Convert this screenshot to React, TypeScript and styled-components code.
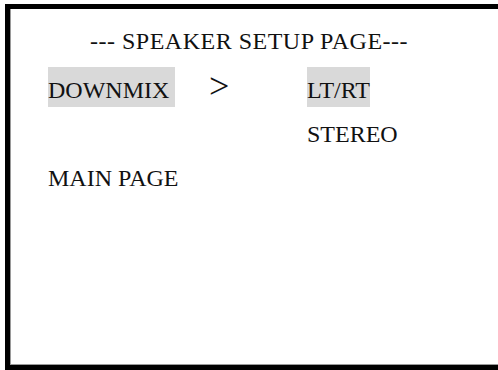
import * as React from 'react';
import styled, { createGlobalStyle } from 'styled-components';

const GlobalStyle = createGlobalStyle`
  html, body {
    margin: 0;
    padding: 0;
    background: #ffffff;
    overflow: hidden;
  }
  body {
    font-family: "Liberation Serif", "Times New Roman", serif;
    color: #111111;
  }
`

const App: React.FC = () => {
  return (
    <>
      <GlobalStyle />
      <Screen>
        <Title>--- SPEAKER SETUP PAGE---</Title>
        <Menu>
          <Cell>
            <Item selected trail>DOWNMIX</Item>
          </Cell>
          <Cell>
            <Arrow>&gt;</Arrow>
          </Cell>
          <Cell>
            <Item selected>LT/RT</Item>
          </Cell>
          <Cell />
          <Cell />
          <Cell>
            <Item>STEREO</Item>
          </Cell>
        </Menu>
        <Line>
          <Item>MAIN PAGE</Item>
        </Line>
      </Screen>
    </>
  )
}

const Screen = styled.div`
  box-sizing: border-box;
  width: 100%;
  max-width: 493px;
  height: 366px;
  margin: 4px 0 0 5px;
  padding: 10px 0 0 38px;
  border-top: 5px solid #000000;
  border-left: 5px solid #000000;
  border-bottom: 5px solid #000000;
  box-shadow: inset 1px 0 0 #9a9a9a, inset 0 -1px 0 #9a9a9a;
  font-size: 24px;
`
const Title = styled.div`
  line-height: 44px;
  margin: 0 0 5px 42px;
  letter-spacing: 0.5px;
  white-space: pre;
`
const Menu = styled.div`
  display: grid;
  grid-template-columns: 160px 99px 1fr;
  grid-auto-rows: 44px;
  align-items: baseline;
`
const Cell = styled.div`
  line-height: 44px;
  white-space: pre;
`
const Line = styled.div`
  line-height: 44px;
`
const Item = styled.span<{ selected?: boolean; trail?: boolean }>`
  display: inline;
  padding: 10px ${(p) => (p.trail ? '6px' : '0')} 4px 0;
  background: ${(p) => (p.selected ? '#d9d9d9' : 'transparent')};
`
const Arrow = styled.span`
  font-size: 36px;
  line-height: 1;
  margin-left: 1px;
`

export default App;
